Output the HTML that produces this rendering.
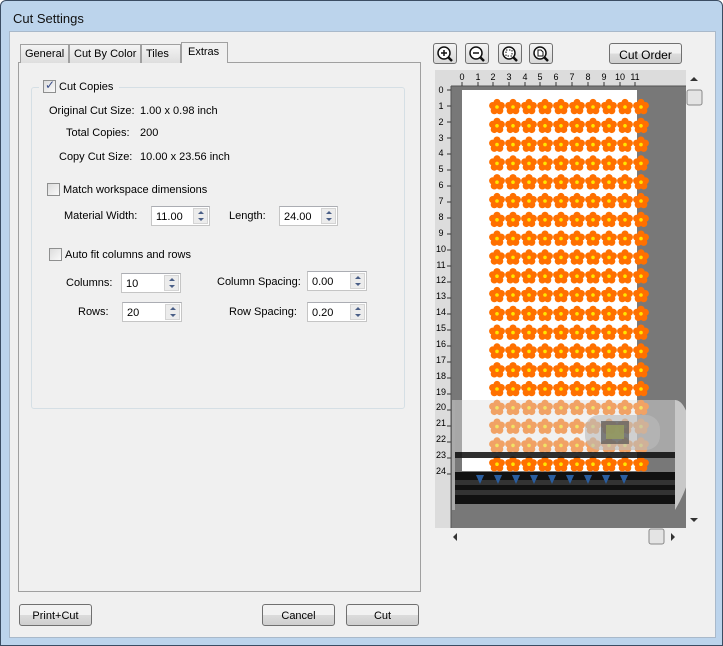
<!DOCTYPE html>
<html><head><meta charset="utf-8"><style>
*{box-sizing:border-box}
body{margin:0;width:723px;height:646px;overflow:hidden;font-family:"Liberation Sans",sans-serif;font-size:11px;color:#000;background:#fff}
.win{position:absolute;left:0;top:0;width:723px;height:646px;background:#bcd4ec;border:1px solid #3b4d63;border-radius:6px 6px 0 0}
.title{position:absolute;left:12px;top:10px;font-size:13px;color:#111}
.client{position:absolute;left:8px;top:30px;width:707px;height:607px;background:#f0f0f0;border:1px solid #a9b9ca}
.a{position:absolute;white-space:nowrap}
.tab{position:absolute;top:43px;height:19px;background:linear-gradient(#f4f4f4,#dedede);border:1px solid #a0a0a0;border-bottom:none;padding:3px 0 0 4px;font-size:11px;white-space:nowrap;overflow:hidden}
.panel{position:absolute;left:17px;top:61px;width:403px;height:530px;border:1px solid #a0a0a0;background:#f0f0f0}
.group{position:absolute;left:30px;top:86px;width:374px;height:322px;border:1px solid #d5dfe5;border-radius:3px}
.cb{position:absolute;width:13px;height:13px;border:1px solid #8e8f8f;background:linear-gradient(135deg,#dcdcdc,#fafafa)}
.inp{position:absolute;height:20px;background:#fff;border:1px solid #c5c5c5;border-top-color:#abadb3;padding:4px 0 0 4px}
.spin{position:absolute;right:1px;top:1px;width:15px;height:16px;border:1px solid #d4d4d4;background:#ececec}
.spin:before{content:"";position:absolute;left:4px;top:2px;border:3px solid transparent;border-bottom:3px solid #4a5f87;border-top:none}
.spin:after{content:"";position:absolute;left:4px;top:9px;border:3px solid transparent;border-top:3px solid #4a5f87;border-bottom:none}
.btn{position:absolute;height:22px;border:1px solid #707070;border-radius:3px;background:linear-gradient(#f2f2f2 50%,#dcdcdc 50%,#cfcfcf);text-align:center;padding-top:5px;font-size:11px}
.ib{position:absolute;top:42px;width:24px;height:21px;border:1px solid #707070;border-radius:3px;background:linear-gradient(#f4f4f4,#d8d8d8)}
</style></head><body>
<div class="win">
<div class="title">Cut Settings</div>
<div class="client"></div>
<div class="panel"></div>
<div class="tab" style="left:19px;width:49px">General</div>
<div class="tab" style="left:68px;width:72px">Cut By Color</div>
<div class="tab" style="left:140px;width:40px">Tiles</div>
<div class="tab" style="left:180px;top:41px;height:21px;width:47px;background:#f0f0f0;padding-left:6px">Extras</div>
<div class="group"></div>
<div class="a" style="left:38px;top:80px;width:80px;height:14px;background:#f0f0f0"></div>
<div class="cb" style="left:42px;top:79px"><span style="position:absolute;left:1px;top:-3px;color:#3b4f8a;font-size:12px">✓</span></div>
<div class="a" style="left:58px;top:80px">Cut Copies</div>
<div class="a" style="left:48px;top:104px">Original Cut Size:</div><div class="a" style="left:139px;top:104px">1.00 x 0.98 inch</div>
<div class="a" style="left:65px;top:126px">Total Copies:</div><div class="a" style="left:139px;top:126px">200</div>
<div class="a" style="left:58px;top:150px">Copy Cut Size:</div><div class="a" style="left:139px;top:150px">10.00 x 23.56 inch</div>
<div class="cb" style="left:46px;top:182px"></div><div class="a" style="left:62px;top:183px">Match workspace dimensions</div>
<div class="a" style="left:63px;top:209px">Material Width:</div>
<div class="inp" style="left:150px;top:205px;width:59px">11.00<div class="spin"></div></div>
<div class="a" style="left:228px;top:209px">Length:</div>
<div class="inp" style="left:278px;top:205px;width:59px">24.00<div class="spin"></div></div>
<div class="cb" style="left:48px;top:247px"></div><div class="a" style="left:64px;top:248px">Auto fit columns and rows</div>
<div class="a" style="left:65px;top:276px">Columns:</div>
<div class="inp" style="left:120px;top:272px;width:60px">10<div class="spin"></div></div>
<div class="a" style="left:216px;top:275px">Column Spacing:</div>
<div class="inp" style="left:306px;top:270px;width:60px">0.00<div class="spin"></div></div>
<div class="a" style="left:77px;top:305px">Rows:</div>
<div class="inp" style="left:121px;top:301px;width:60px">20<div class="spin"></div></div>
<div class="a" style="left:228px;top:305px">Row Spacing:</div>
<div class="inp" style="left:306px;top:301px;width:60px">0.20<div class="spin"></div></div>

<div class="btn" style="left:18px;top:603px;width:73px">Print+Cut</div>
<div class="btn" style="left:261px;top:603px;width:73px">Cancel</div>
<div class="btn" style="left:345px;top:603px;width:73px">Cut</div>

<div class="ib" style="left:432px"><svg width="22" height="19"><circle cx="10" cy="9" r="6" fill="#fff" stroke="#111" stroke-width="1.5"/><path d="M7 9h6M10 6v6" stroke="#111" stroke-width="1.5"/><path d="M14 13l4 4" stroke="#111" stroke-width="2.5"/></svg></div>
<div class="ib" style="left:464px"><svg width="22" height="19"><circle cx="10" cy="9" r="6" fill="#fff" stroke="#111" stroke-width="1.5"/><path d="M7 9h6" stroke="#111" stroke-width="1.5"/><path d="M14 13l4 4" stroke="#111" stroke-width="2.5"/></svg></div>
<div class="ib" style="left:497px"><svg width="22" height="19"><circle cx="10" cy="9" r="6" fill="#fff" stroke="#111" stroke-width="1.5"/><rect x="7" y="6" width="6" height="6" fill="none" stroke="#111" stroke-dasharray="1.5 1.5"/><path d="M14 13l4 4" stroke="#111" stroke-width="2.5"/></svg></div>
<div class="ib" style="left:528px"><svg width="22" height="19"><circle cx="10" cy="9" r="6" fill="#fff" stroke="#111" stroke-width="1.5"/><path d="M8 6h3l2 2v4h-5z" fill="none" stroke="#111"/><path d="M14 13l4 4" stroke="#111" stroke-width="2.5"/></svg></div>
<div class="btn" style="left:608px;top:42px;width:73px;height:21px;padding-top:4px;font-size:12px">Cut Order</div>

<svg class="a" style="left:434px;top:69px" width="268" height="476">
<defs><g id="f"><circle cx="0" cy="-4.5" r="3.6"/><circle cx="4.3" cy="-1.4" r="3.6"/><circle cx="2.7" cy="3.7" r="3.6"/><circle cx="-2.7" cy="3.7" r="3.6"/><circle cx="-4.3" cy="-1.4" r="3.6"/><circle r="4"/><circle r="1.8" fill="#ffe600"/></g>
<g id="r"><use href="#f" x="62"/><use href="#f" x="78"/><use href="#f" x="94"/><use href="#f" x="110"/><use href="#f" x="126"/><use href="#f" x="142"/><use href="#f" x="158"/><use href="#f" x="174"/><use href="#f" x="190"/><use href="#f" x="206"/></g></defs>
<rect width="251" height="458" fill="#787878"/>
<rect x="27" y="20" width="175" height="381" fill="#fff"/>
<g fill="#ff7000">
<use href="#r" y="37"/><use href="#r" y="55.8"/><use href="#r" y="74.6"/><use href="#r" y="93.4"/><use href="#r" y="112.2"/><use href="#r" y="131"/><use href="#r" y="149.8"/><use href="#r" y="168.6"/><use href="#r" y="187.4"/><use href="#r" y="206.2"/><use href="#r" y="225"/><use href="#r" y="243.8"/><use href="#r" y="262.6"/><use href="#r" y="281.4"/><use href="#r" y="300.2"/><use href="#r" y="319"/><use href="#r" y="337.8"/><use href="#r" y="356.6"/><use href="#r" y="375.4"/><use href="#r" y="394.2"/>
</g>
<rect x="20" y="330" width="220" height="58" fill="#e0e0e0" opacity="0.45"/>
<path d="M20 388h220v-6H20z" fill="#000" opacity="0.8"/>
<rect x="20" y="402" width="220" height="32" fill="#111"/>
<rect x="20" y="410" width="220" height="5" fill="#333"/><rect x="20" y="420" width="220" height="5" fill="#333"/>
<g fill="#2a5ea0"><path d="M41 405h8l-4 9z"/><path d="M59 405h8l-4 9z"/><path d="M77 405h8l-4 9z"/><path d="M95 405h8l-4 9z"/><path d="M113 405h8l-4 9z"/><path d="M131 405h8l-4 9z"/><path d="M149 405h8l-4 9z"/><path d="M167 405h8l-4 9z"/><path d="M185 405h8l-4 9z"/></g>
<path d="M240 330c12 0 18 30 18 50s-6 40-18 60z" fill="#c8c8c8"/>
<rect x="17" y="330" width="3" height="110" fill="#aaa"/>
<rect x="150" y="345" width="75" height="35" rx="14" fill="#bbb" opacity="0.6"/>
<rect x="166" y="351" width="28" height="23" fill="#555" opacity="0.7"/><rect x="171" y="355" width="18" height="14" fill="#9aa060" opacity="0.8"/>
<rect width="251" height="16" fill="#dcdcdc"/><rect width="16" height="458" fill="#dcdcdc"/>
<path d="M16 16V458M16 16H251" stroke="#555"/>
<g stroke="#333"><path d="M27 12v4M43 12v4M58 12v4M74 12v4M90 12v4M105 12v4M121 12v4M137 12v4M153 12v4M169 12v4M185 12v4M200 12v4"/>
<path d="M12 20h4M12 36h4M12 52h4M12 68h4M12 84h4M12 100h4M12 116h4M12 132h4M12 148h4M12 164h4M12 180h4M12 196h4M12 212h4M12 228h4M12 244h4M12 260h4M12 276h4M12 292h4M12 308h4M12 324h4M12 340h4M12 356h4M12 372h4M12 388h4M12 404h4"/></g>
<g font-size="9" font-family="Liberation Sans" text-anchor="middle">
<text x="27" y="10">0</text><text x="43" y="10">1</text><text x="58" y="10">2</text><text x="74" y="10">3</text><text x="90" y="10">4</text><text x="105" y="10">5</text><text x="121" y="10">6</text><text x="137" y="10">7</text><text x="153" y="10">8</text><text x="169" y="10">9</text><text x="185" y="10">10</text><text x="200" y="10">11</text>
</g>
<g font-size="9" font-family="Liberation Sans" text-anchor="middle">
<text x="6" y="23">0</text><text x="6" y="39">1</text><text x="6" y="55">2</text><text x="6" y="71">3</text><text x="6" y="86">4</text><text x="6" y="102">5</text><text x="6" y="118">6</text><text x="6" y="134">7</text><text x="6" y="150">8</text><text x="6" y="166">9</text><text x="6" y="182">10</text><text x="6" y="198">11</text><text x="6" y="213">12</text><text x="6" y="229">13</text><text x="6" y="245">14</text><text x="6" y="261">15</text><text x="6" y="277">16</text><text x="6" y="293">17</text><text x="6" y="309">18</text><text x="6" y="325">19</text><text x="6" y="340">20</text><text x="6" y="356">21</text><text x="6" y="372">22</text><text x="6" y="388">23</text><text x="6" y="404">24</text>
</g>
<rect x="251" y="0" width="17" height="458" fill="#f0f0f0"/>
<path d="M255 11l4-4 4 4z" fill="#333"/><path d="M255 448l4 4 4-4z" fill="#333"/>
<rect x="252" y="20" width="15" height="15" rx="2" fill="#e4e4e4" stroke="#888"/>
<rect x="0" y="458" width="251" height="18" fill="#f0f0f0"/>
<path d="M22 463l-4 4 4 4z" fill="#333"/><path d="M236 463l4 4-4 4z" fill="#333"/>
<rect x="214" y="459" width="15" height="15" rx="2" fill="#e4e4e4" stroke="#888"/>
</svg>
</div>
</body></html>
